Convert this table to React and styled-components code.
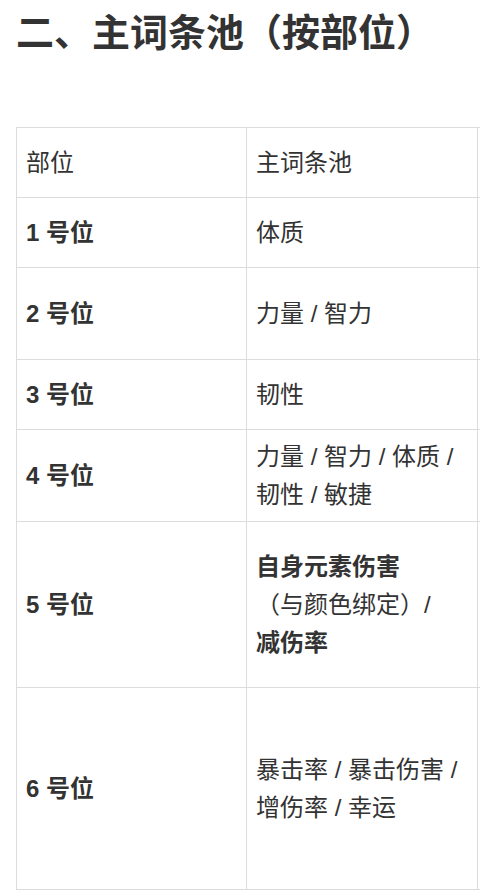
import { Fragment } from 'react';
import styled, { createGlobalStyle } from 'styled-components';

const GlobalStyle = createGlobalStyle`
  html, body {
    margin: 0;
    padding: 0;
    background: #fff;
    overflow: hidden;
  }
  body {
    font-family: "Liberation Sans", "Noto Sans CJK SC", sans-serif;
    color: #333;
  }
`;

const Page = styled.div`
  width: 480px;
  height: 891px;
  overflow: hidden;
  padding: 0 0 0 16px;
  box-sizing: border-box;
`;

const Title = styled.h2`
  margin: 0;
  padding-top: 12px;
  font-size: 38px;
  line-height: 42px;
  font-weight: 700;
  color: #333;
  white-space: nowrap;
`;

const Table = styled.div`
  margin-top: 73px;
  display: grid;
  grid-template-columns: 230px 231px 200px;
  width: 661px;
  border-top: 1px solid #dcdcdc;
  border-left: 1px solid #dcdcdc;
`;

const Cell = styled.div`
  box-sizing: border-box;
  height: ${p => p.$h}px;
  padding: 0 10px 0 9px;
  display: flex;
  align-items: center;
  border-right: 1px solid #dcdcdc;
  border-bottom: 1px solid #dcdcdc;
  font-size: 24px;
  line-height: 38px;
  font-weight: ${p => (p.$bold ? 700 : 400)};
  color: #333;
`;

const Text = styled.div``;

const rows = [
  { h: 70, label: '部位', header: true, pool: '主词条池' },
  { h: 70, label: '1 号位', pool: '体质' },
  { h: 92, label: '2 号位', pool: '力量 / 智力' },
  { h: 70, label: '3 号位', pool: '韧性' },
  { h: 92, label: '4 号位', pool: '力量 / 智力 / 体质 / 韧性 / 敏捷' },
  {
    h: 166,
    label: '5 号位',
    pool: (
      <>
        <b>自身元素伤害</b>
        <br />
        （与颜色绑定）/
        <br />
        <b>减伤率</b>
      </>
    ),
  },
  { h: 202, label: '6 号位', pool: '暴击率 / 暴击伤害 / 增伤率 / 幸运' },
];

export default function App() {
  return (
    <>
      <GlobalStyle />
      <Page>
        <Title>二、主词条池（按部位）</Title>
        <Table>
          {rows.map((r, i) => (
            <Fragment key={i}>
              <Cell $h={r.h} $bold={!r.header}>
                <Text>{r.label}</Text>
              </Cell>
              <Cell $h={r.h}>
                <Text>{r.pool}</Text>
              </Cell>
              <Cell $h={r.h} />
            </Fragment>
          ))}
        </Table>
      </Page>
    </>
  );
}
